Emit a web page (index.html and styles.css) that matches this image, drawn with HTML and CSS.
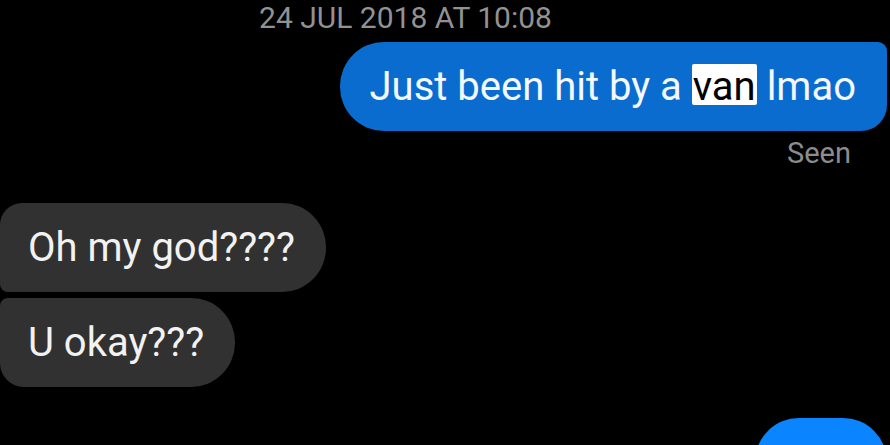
FILE: index.html
```html
<!DOCTYPE html>
<html lang="en">
<head>
    <meta charset="UTF-8">
    <meta name="viewport" content="width=device-width, initial-scale=1.0">
    <title>Messages</title>
    <link rel="stylesheet" href="styles.css">
</head>
<body>
    <div class="thread">
        <!-- Timestamp -->
        <div class="timestamp">24 JUL 2018 AT 10:08</div>

        <!-- Outgoing -->
        <div class="row out">
            <div class="bubble sent"><p>Just been hit by a <span class="highlight">van</span> lmao</p></div>
        </div>
        <div class="seen">Seen</div>

        <!-- Incoming -->
        <div class="group in">
            <div class="bubble received first"><p>Oh my god????</p></div>
            <div class="bubble received last"><p>U okay???</p></div>
        </div>

        <!-- Next outgoing, cut off by the screen -->
        <div class="row out">
            <div class="bubble next"></div>
        </div>
    </div>
</body>
</html>
```

FILE: styles.css
```css
/* Reset and base styles */
* {
    margin: 0;
    padding: 0;
    box-sizing: border-box;
}

body {
    background-color: #000;
    font-family: 'Roboto', 'Liberation Sans', sans-serif;
}

.thread {
    display: flex;
    flex-direction: column;
    height: 100vh;
    overflow: hidden;
    padding: 1px 3px 0 0;
}

/* Timestamp */
.timestamp {
    font-size: 30px;
    line-height: 34px;
    color: #929292;
    text-align: center;
    padding-right: 76px;
}

/* Bubbles */
.row {
    display: flex;
    flex-shrink: 0;
}

.row.out {
    justify-content: flex-end;
}

.bubble {
    display: flex;
    align-items: center;
    flex-shrink: 0;
    height: 89px;
    padding: 0 31px 0 30px;
    font-size: 40px;
    line-height: 46px;
    white-space: nowrap;
}

.sent {
    margin-top: 7px;
    background-color: #0a6ccf;
    color: #f4f8ff;
    border-radius: 44px 9px 26px 44px;
}

.highlight {
    display: inline-block;
    background-color: #fff;
    color: #000;
    line-height: 37px;
    padding: 4px 1px 0;
    border-radius: 2px;
}

.seen {
    align-self: flex-end;
    margin: 5px 36px 0 0;
    font-size: 29px;
    line-height: 34px;
    color: #8c8c8c;
}

/* Incoming group */
.group.in {
    display: flex;
    flex-direction: column;
    align-items: flex-start;
    flex-shrink: 0;
    gap: 6px;
    margin-top: 33px;
}

.received {
    background-color: #313131;
    color: #f2f2f2;
    padding: 0 31px 0 28px;
}

.received.first {
    border-radius: 22px 44px 44px 8px;
}

.received.last {
    border-radius: 8px 44px 44px 24px;
}

.next {
    width: 132px;
    margin-top: 31px;
    background-color: #0a84ff;
    border-radius: 44px 44px 8px 44px;
}
```
